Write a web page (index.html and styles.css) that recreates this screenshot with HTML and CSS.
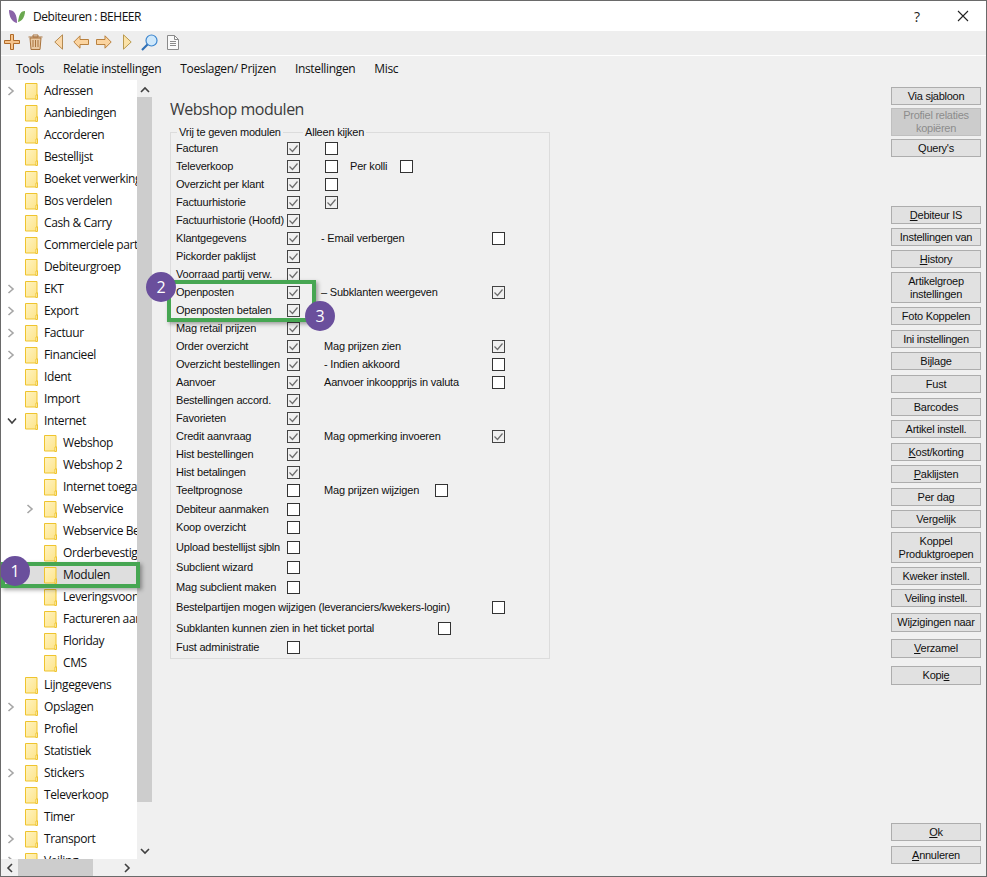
FILE: index.html
```html
<!DOCTYPE html>
<html lang="nl">
<head>
<meta charset="utf-8">
<title>Debiteuren : BEHEER</title>
<link rel="stylesheet" href="styles.css">
</head>
<body>
<svg class="defs" width="0" height="0" aria-hidden="true">
  <defs>
    <linearGradient id="fg" x1="0" y1="0" x2="1" y2="1">
      <stop offset="0" stop-color="#fff3c0"/><stop offset="1" stop-color="#fde48a"/>
    </linearGradient>
    <symbol id="folder" viewBox="0 0 13 17">
      <path d="M.5.5h11.5v11.5h-1v4H.5z" fill="url(#fg)" stroke="#efc42e"/>
      <path d="M10.5 16.5h2v-5" fill="none" stroke="#efc42e"/>
    </symbol>
    <symbol id="chev" viewBox="0 0 8 10">
      <path d="M1.5 1l4.500 4-4.500 4" fill="none" stroke="#a6a6a6" stroke-width="1.600"/>
    </symbol>
    <symbol id="chevd" viewBox="0 0 10 8">
      <path d="M1 1.500l4 4.500 4-4.500" fill="none" stroke="#404040" stroke-width="1.600"/>
    </symbol>
    <symbol id="tick" viewBox="0 0 13 13">
      <path d="M2.500 6.500l3 3 5-6" fill="none" stroke="#6d6d6d" stroke-width="1.200"/>
    </symbol>
  </defs>
</svg>
<div class="window">
  <header class="titlebar">
    <svg class="logo" width="18" height="15" viewBox="0 0 18 15"><path d="M1 1c5 0 8 4 8 13C4 13 1 8 1 1z" fill="#8a63a8"/><path d="M17 2c-4 0-6 3-7 11 4-1 7-5 7-11z" fill="#6aa84f"/></svg>
    <span class="title">Debiteuren : BEHEER</span>
    <span class="help">?</span>
    <svg class="close" width="12" height="12" viewBox="0 0 12 12"><path d="M1 1l10 10M11 1L1 11" stroke="#222" stroke-width="1.100"/></svg>
  </header>
  <div class="toolbar">
    <svg class="ti t-plus" width="16" height="16" viewBox="0 0 16 16"><path d="M6.500.5h3v6h6v3h-6v6h-3v-6h-6v-3h6z" fill="#f6c48c" stroke="#b06a28"/></svg>
    <svg class="ti t-trash" width="15" height="16" viewBox="0 0 15 16"><path d="M2 4h11l-1 11.500H3z" fill="#e9c9a2" stroke="#a9733c"/><path d="M.5 3h14M5 1h5v2H5zM5 6v7M7.500 6v7M10 6v7" fill="none" stroke="#a9733c"/></svg>
    <svg class="ti t-tl" width="9" height="16" viewBox="0 0 9 16"><path d="M8.500 .8v14.400L.8 8z" fill="#fbd9ab" stroke="#b58a50"/></svg>
    <svg class="ti t-al" width="16" height="14" viewBox="0 0 16 14"><path d="M7 .8L.8 7 7 13.200V9.500h8.500v-5H7z" fill="#fbd4a0" stroke="#b9813f"/></svg>
    <svg class="ti t-ar" width="16" height="14" viewBox="0 0 16 14"><path d="M9 .8L15.200 7 9 13.200V9.500H.5v-5H9z" fill="#fbd4a0" stroke="#b9813f"/></svg>
    <svg class="ti t-tr" width="9" height="16" viewBox="0 0 9 16"><path d="M.5 .8v14.400L8.200 8z" fill="#fbe2a8" stroke="#b99a50"/></svg>
    <svg class="ti t-mag" width="17" height="17" viewBox="0 0 17 17"><circle cx="10.500" cy="6.500" r="5.500" fill="#cfe8fb" stroke="#3c86cf" stroke-width="1.200"/><path d="M6.500 10.500L1 16" stroke="#2f6fb5" stroke-width="2.200"/></svg>
    <svg class="ti t-doc" width="12" height="15" viewBox="0 0 12 15"><path d="M.5.500h7l4 4v10H.5z" fill="#fafafa" stroke="#8a8a8a"/><path d="M7.500.5v4h4M3 6.500h6M3 8.500h6M3 10.500h6" fill="none" stroke="#8a8a8a"/></svg>
  </div>
  <nav class="menubar">
    <span class="menu m1">Tools</span>
    <span class="menu">Relatie instellingen</span>
    <span class="menu">Toeslagen/ Prijzen</span>
    <span class="menu">Instellingen</span>
    <span class="menu">Misc</span>
  </nav>
  <div class="content">
    <aside class="treewrap">
      <div class="treetop">
        <div class="tree">
          <div class="node"><svg class="exp"><use href="#chev"/></svg><svg class="fld"><use href="#folder"/></svg><span>Adressen</span></div>
          <div class="node"><i class="noexp"></i><svg class="fld"><use href="#folder"/></svg><span>Aanbiedingen</span></div>
          <div class="node"><i class="noexp"></i><svg class="fld"><use href="#folder"/></svg><span>Accorderen</span></div>
          <div class="node"><i class="noexp"></i><svg class="fld"><use href="#folder"/></svg><span>Bestellijst</span></div>
          <div class="node"><i class="noexp"></i><svg class="fld"><use href="#folder"/></svg><span>Boeket verwerking</span></div>
          <div class="node"><i class="noexp"></i><svg class="fld"><use href="#folder"/></svg><span>Bos verdelen</span></div>
          <div class="node"><i class="noexp"></i><svg class="fld"><use href="#folder"/></svg><span>Cash &amp; Carry</span></div>
          <div class="node"><i class="noexp"></i><svg class="fld"><use href="#folder"/></svg><span>Commerciele partijen</span></div>
          <div class="node"><i class="noexp"></i><svg class="fld"><use href="#folder"/></svg><span>Debiteurgroep</span></div>
          <div class="node"><svg class="exp"><use href="#chev"/></svg><svg class="fld"><use href="#folder"/></svg><span>EKT</span></div>
          <div class="node"><svg class="exp"><use href="#chev"/></svg><svg class="fld"><use href="#folder"/></svg><span>Export</span></div>
          <div class="node"><svg class="exp"><use href="#chev"/></svg><svg class="fld"><use href="#folder"/></svg><span>Factuur</span></div>
          <div class="node"><svg class="exp"><use href="#chev"/></svg><svg class="fld"><use href="#folder"/></svg><span>Financieel</span></div>
          <div class="node"><i class="noexp"></i><svg class="fld"><use href="#folder"/></svg><span>Ident</span></div>
          <div class="node"><i class="noexp"></i><svg class="fld"><use href="#folder"/></svg><span>Import</span></div>
          <div class="node"><svg class="expd"><use href="#chevd"/></svg><svg class="fld"><use href="#folder"/></svg><span>Internet</span></div>
          <div class="node sub"><i class="noexp"></i><svg class="fld"><use href="#folder"/></svg><span>Webshop</span></div>
          <div class="node sub"><i class="noexp"></i><svg class="fld"><use href="#folder"/></svg><span>Webshop 2</span></div>
          <div class="node sub"><i class="noexp"></i><svg class="fld"><use href="#folder"/></svg><span>Internet toegang</span></div>
          <div class="node sub"><svg class="exp"><use href="#chev"/></svg><svg class="fld"><use href="#folder"/></svg><span>Webservice</span></div>
          <div class="node sub"><i class="noexp"></i><svg class="fld"><use href="#folder"/></svg><span>Webservice Beheer</span></div>
          <div class="node sub"><i class="noexp"></i><svg class="fld"><use href="#folder"/></svg><span>Orderbevestiging</span></div>
          <div class="node sub sel"><i class="noexp"></i><svg class="fld"><use href="#folder"/></svg><span>Modulen</span></div>
          <div class="node sub"><i class="noexp"></i><svg class="fld"><use href="#folder"/></svg><span>Leveringsvoorwaarden</span></div>
          <div class="node sub"><i class="noexp"></i><svg class="fld"><use href="#folder"/></svg><span>Factureren aan</span></div>
          <div class="node sub"><i class="noexp"></i><svg class="fld"><use href="#folder"/></svg><span>Floriday</span></div>
          <div class="node sub"><i class="noexp"></i><svg class="fld"><use href="#folder"/></svg><span>CMS</span></div>
          <div class="node"><i class="noexp"></i><svg class="fld"><use href="#folder"/></svg><span>Lijngegevens</span></div>
          <div class="node"><svg class="exp"><use href="#chev"/></svg><svg class="fld"><use href="#folder"/></svg><span>Opslagen</span></div>
          <div class="node"><i class="noexp"></i><svg class="fld"><use href="#folder"/></svg><span>Profiel</span></div>
          <div class="node"><i class="noexp"></i><svg class="fld"><use href="#folder"/></svg><span>Statistiek</span></div>
          <div class="node"><svg class="exp"><use href="#chev"/></svg><svg class="fld"><use href="#folder"/></svg><span>Stickers</span></div>
          <div class="node"><i class="noexp"></i><svg class="fld"><use href="#folder"/></svg><span>Televerkoop</span></div>
          <div class="node"><i class="noexp"></i><svg class="fld"><use href="#folder"/></svg><span>Timer</span></div>
          <div class="node"><svg class="exp"><use href="#chev"/></svg><svg class="fld"><use href="#folder"/></svg><span>Transport</span></div>
          <div class="node"><svg class="exp"><use href="#chev"/></svg><svg class="fld"><use href="#folder"/></svg><span>Veiling</span></div>
        </div>
        <div class="vscroll">
          <svg class="sa" width="10" height="8" viewBox="0 0 10 8"><path d="M1 6l4-4 4 4" fill="none" stroke="#404040" stroke-width="1.600"/></svg>
          <div class="vthumb"></div>
          <svg class="sa sa-d" width="10" height="8" viewBox="0 0 10 8"><path d="M1 2l4 4 4-4" fill="none" stroke="#404040" stroke-width="1.600"/></svg>
        </div>
      </div>
      <div class="hscroll">
        <svg width="8" height="10" viewBox="0 0 8 10"><path d="M6 1L2 5l4 4" fill="none" stroke="#404040" stroke-width="1.600"/></svg>
        <div class="hthumb"></div>
        <svg class="ha-r" width="8" height="10" viewBox="0 0 8 10"><path d="M2 1l4 4-4 4" fill="none" stroke="#404040" stroke-width="1.600"/></svg>
      </div>
    </aside>
    <main class="main">
      <h1 class="heading">Webshop modulen</h1>
      <section class="group">
        <span class="legend l1">Vrij te geven modulen</span>
        <span class="legend l2">Alleen kijken</span>
        <div class="row"><span class="lbl">Facturen</span><b class="cb on"><svg><use href="#tick"/></svg></b><b class="cb c2"></b></div>
        <div class="row"><span class="lbl">Televerkoop</span><b class="cb on"><svg><use href="#tick"/></svg></b><b class="cb c2"></b><span class="perkolli">Per kolli</span><b class="cb"></b></div>
        <div class="row"><span class="lbl">Overzicht per klant</span><b class="cb on"><svg><use href="#tick"/></svg></b><b class="cb c2"></b></div>
        <div class="row"><span class="lbl">Factuurhistorie</span><b class="cb on"><svg><use href="#tick"/></svg></b><b class="cb c2 on"><svg><use href="#tick"/></svg></b></div>
        <div class="row"><span class="lbl">Factuurhistorie (Hoofd)</span><b class="cb on"><svg><use href="#tick"/></svg></b></div>
        <div class="row"><span class="lbl">Klantgegevens</span><b class="cb on"><svg><use href="#tick"/></svg></b><span class="extra e-l">- Email verbergen</span><b class="cb"></b></div>
        <div class="row"><span class="lbl">Pickorder paklijst</span><b class="cb on"><svg><use href="#tick"/></svg></b></div>
        <div class="row"><span class="lbl">Voorraad partij verw.</span><b class="cb on"><svg><use href="#tick"/></svg></b></div>
        <div class="row"><span class="lbl">Openposten</span><b class="cb on"><svg><use href="#tick"/></svg></b><span class="extra e-l">– Subklanten weergeven</span><b class="cb on"><svg><use href="#tick"/></svg></b></div>
        <div class="row"><span class="lbl">Openposten betalen</span><b class="cb on"><svg><use href="#tick"/></svg></b></div>
        <div class="row"><span class="lbl">Mag retail prijzen</span><b class="cb on"><svg><use href="#tick"/></svg></b></div>
        <div class="row"><span class="lbl">Order overzicht</span><b class="cb on"><svg><use href="#tick"/></svg></b><span class="extra">Mag prijzen zien</span><b class="cb on"><svg><use href="#tick"/></svg></b></div>
        <div class="row"><span class="lbl">Overzicht bestellingen</span><b class="cb on"><svg><use href="#tick"/></svg></b><span class="extra">- Indien akkoord</span><b class="cb"></b></div>
        <div class="row"><span class="lbl">Aanvoer</span><b class="cb on"><svg><use href="#tick"/></svg></b><span class="extra">Aanvoer inkoopprijs in valuta</span><b class="cb"></b></div>
        <div class="row"><span class="lbl">Bestellingen accord.</span><b class="cb on"><svg><use href="#tick"/></svg></b></div>
        <div class="row"><span class="lbl">Favorieten</span><b class="cb on"><svg><use href="#tick"/></svg></b></div>
        <div class="row"><span class="lbl">Credit aanvraag</span><b class="cb on"><svg><use href="#tick"/></svg></b><span class="extra">Mag opmerking invoeren</span><b class="cb on"><svg><use href="#tick"/></svg></b></div>
        <div class="row"><span class="lbl">Hist bestellingen</span><b class="cb on"><svg><use href="#tick"/></svg></b></div>
        <div class="row"><span class="lbl">Hist betalingen</span><b class="cb on"><svg><use href="#tick"/></svg></b></div>
        <div class="row"><span class="lbl">Teeltprognose</span><b class="cb"></b><span class="extra e-s">Mag prijzen wijzigen</span><b class="cb"></b></div>
        <div class="row r19"><span class="lbl">Debiteur aanmaken</span><b class="cb"></b></div>
        <div class="row"><span class="lbl">Koop overzicht</span><b class="cb"></b></div>
        <div class="row r20"><span class="lbl">Upload bestellijst sjbln</span><b class="cb"></b></div>
        <div class="row r20"><span class="lbl">Subclient wizard</span><b class="cb"></b></div>
        <div class="row r20"><span class="lbl">Mag subclient maken</span><b class="cb"></b></div>
        <div class="row r20"><span class="lbl wide1">Bestelpartijen mogen wijzigen (leveranciers/kwekers-login)</span><b class="cb"></b></div>
        <div class="row r22"><span class="lbl wide2">Subklanten kunnen zien in het ticket portal</span><b class="cb"></b></div>
        <div class="row"><span class="lbl">Fust administratie</span><b class="cb"></b></div>
      </section>
    </main>
    <div class="buttons">
      <div class="bgroup">
        <button class="btn">Via sjabloon</button>
        <button class="btn tall dis">Profiel relaties<br>kopiëren</button>
        <button class="btn g3">Query's</button>
      </div>
      <div class="bgroup g-mid">
        <button class="btn"><u>D</u>ebiteur IS</button>
        <button class="btn">Instellingen van</button>
        <button class="btn"><u>H</u>istory</button>
        <button class="btn tall">Artikelgroep<br>instellingen</button>
        <button class="btn">Foto Koppelen</button>
        <button class="btn g5">Ini instellingen</button>
        <button class="btn">Bijlage</button>
        <button class="btn g5">Fust</button>
        <button class="btn g5">Barcodes</button>
        <button class="btn">Artikel instell.</button>
        <button class="btn g5"><u>K</u>ost/korting</button>
        <button class="btn"><u>P</u>aklijsten</button>
        <button class="btn g5">Per dag</button>
        <button class="btn">Vergelijk</button>
        <button class="btn tall">Koppel<br>Produktgroepen</button>
        <button class="btn">Kweker instell.</button>
        <button class="btn">Veiling instell.</button>
        <button class="btn big g6">Wijzigingen naar</button>
        <button class="btn big g7"><u>V</u>erzamel</button>
        <button class="btn big g8">Kopi<u>e</u></button>
      </div>
      <div class="bgroup g-end">
        <button class="btn"><u>O</u>k</button>
        <button class="btn g5"><u>A</u>nnuleren</button>
      </div>
    </div>
  </div>
  <div class="mark mark1"></div>
  <div class="mark mark2"></div>
  <div class="badge b1">1</div>
  <div class="badge b2">2</div>
  <div class="badge b3">3</div>
</div>
</body>
</html>
```

FILE: styles.css
```css
* { box-sizing: border-box; }
html, body { margin: 0; padding: 0; }
body { width: 987px; height: 877px; overflow: hidden; background: #fff; font-family: "Open Sans", "Noto Sans", sans-serif; color: #111; }
.defs { position: absolute; }
.window { position: relative; width: 987px; height: 877px; border: 1px solid #6a6a6a; display: flex; flex-direction: column; background: #f0f0f0; overflow: hidden; }

.titlebar { height: 30px; flex: none; background: #fff; display: flex; align-items: center; padding-left: 7px; }
.logo { flex: none; margin-right: 7px; }
.title { font-size: 12px; letter-spacing: -0.45px; color: #111; flex: 1; }
.help { font-size: 14px; font-weight: 500; margin-right: 37px; color: #222; }
.close { margin-right: 17px; }

.toolbar { height: 24px; flex: none; background: #eeeeee; display: flex; align-items: center; padding: 0 0 2px 3px; }
.ti { flex: none; }
.t-trash { margin-left: 8px; }
.t-tl { margin-left: 11px; }
.t-al { margin-left: 10px; }
.t-ar { margin-left: 7px; }
.t-tr { margin-left: 11px; }
.t-mag { margin-left: 9px; }
.t-doc { margin-left: 9px; }

.menubar { height: 25px; flex: none; background: #f0f0f0; border-top: 1px solid #fff; display: flex; align-items: center; padding-left: 15px; font-size: 12px; }
.menu { margin-right: 19px; letter-spacing: -0.35px; }
.m1 { margin-right: 19px; }

.content { flex: 1; display: flex; min-height: 0; }
.treewrap { width: 151px; flex: none; display: flex; flex-direction: column; }
.treetop { height: 779px; display: flex; flex: none; }
.tree { width: 136px; background: #fff; overflow: hidden; flex: none; }
.node { height: 22px; display: flex; align-items: center; white-space: nowrap; font-size: 12px; letter-spacing: -0.4px; color: #111; padding-left: 6px; }
.node span { padding-bottom: 2px; }
.node.sub { padding-left: 25px; }
.node.sel { background: #dedede; }
.noexp { width: 8px; flex: none; display: block; }
.exp { width: 8px; height: 10px; flex: none; }
.expd { width: 10px; height: 8px; flex: none; margin-right: -2px; }
.fld { width: 13px; height: 17px; flex: none; margin-left: 10px; margin-right: 6px; }

.vscroll { width: 15px; flex: none; background: #f0f0f0; display: flex; flex-direction: column; align-items: center; padding-top: 6px; }
.sa { flex: none; }
.vthumb { width: 15px; height: 705px; margin-top: 3px; background: #cdcdcd; flex: none; }
.sa-d { margin-top: 45px; }
.hscroll { height: 17px; width: 151px; background: #f0f0f0; display: flex; align-items: center; padding-left: 5px; flex: none; }
.hthumb { width: 75px; height: 17px; background: #cdcdcd; margin-left: 4px; }
.ha-r { margin-left: 30px; }

.main { width: 739px; flex: none; padding: 18px 0 0 18px; }
.heading { margin: 0; font-size: 16px; font-weight: 400; line-height: 22px; color: #3c3c3c; font-family: "Open Sans", sans-serif; letter-spacing: -0.5px; }
.group { position: relative; width: 380px; height: 527px; margin-top: 12px; border: 1px solid #dcdcdc; padding: 6px 0 0 5px; font-family: "Liberation Sans", Arial, sans-serif; font-size: 11px; letter-spacing: -0.2px; color: #111; }
.legend { position: absolute; top: -7px; background: #f0f0f0; line-height: 12px; padding: 0 2px; }
.l1 { left: 6px; }
.l2 { left: 132px; }
.row { height: 18px; display: flex; align-items: center; white-space: nowrap; }
.r19 { height: 19px; padding-top: 1px; }
.r20 { height: 20px; padding-top: 2px; }
.r22 { height: 22px; padding-top: 2px; }
.lbl { width: 111px; flex: none; }
.wide1 { width: 316px; }
.wide2 { width: 262px; }
.cb { width: 13px; height: 13px; flex: none; display: block; background: #fff; border: 1px solid #333; position: relative; }
.cb.on { background: transparent; border-color: #444; }
.cb svg { position: absolute; left: -1px; top: -1px; width: 13px; height: 13px; }
.c2 { margin-left: 25px; }
.perkolli { margin-left: 12px; width: 50px; flex: none; }
.extra { margin-left: 24px; width: 168px; flex: none; }
.e-l { margin-left: 21px; width: 171px; }
.e-s { width: 111px; }

.buttons { flex: 1; display: flex; flex-direction: column; padding: 7px 0 0 0; font-family: "Liberation Sans", Arial, sans-serif; }
.bgroup { display: flex; flex-direction: column; gap: 4px; }
.g-mid { margin-top: 49px; }
.g-end { margin-top: 138px; }
.btn { width: 90px; height: 18px; flex: none; padding: 0; border: 1px solid #adadad; background: #e1e1e1; font-family: inherit; font-size: 11px; line-height: 13px; color: #111; text-align: center; letter-spacing: -0.25px; }
.tall { height: 31px; }
.big { height: 19px; }
.dis { height: 28px; margin-top: -1px; background: #cccccc; color: #8c8c8c; border-color: #bfbfbf; }
.g3 { margin-top: -1px; }
.g5 { margin-top: 1px; }
.g6 { margin-top: 2px; }
.g7 { margin-top: 3px; }
.g8 { margin-top: 4px; }

.mark { position: absolute; border: 4px solid #46a652; box-shadow: 2px 2px 4px rgba(0, 0, 0, 0.35); }
.mark1 { left: 0; top: 561px; width: 139px; height: 26px; }
.mark2 { left: 166px; top: 279px; width: 149px; height: 42px; }
.badge { position: absolute; width: 30px; height: 30px; border-radius: 50%; background: #6a4f9c; color: #fff; font: 16px/30px "Open Sans", sans-serif; text-align: center; }
.b1 { left: -1px; top: 555px; }
.b2 { left: 145px; top: 271px; }
.b3 { left: 304px; top: 300px; }
```
